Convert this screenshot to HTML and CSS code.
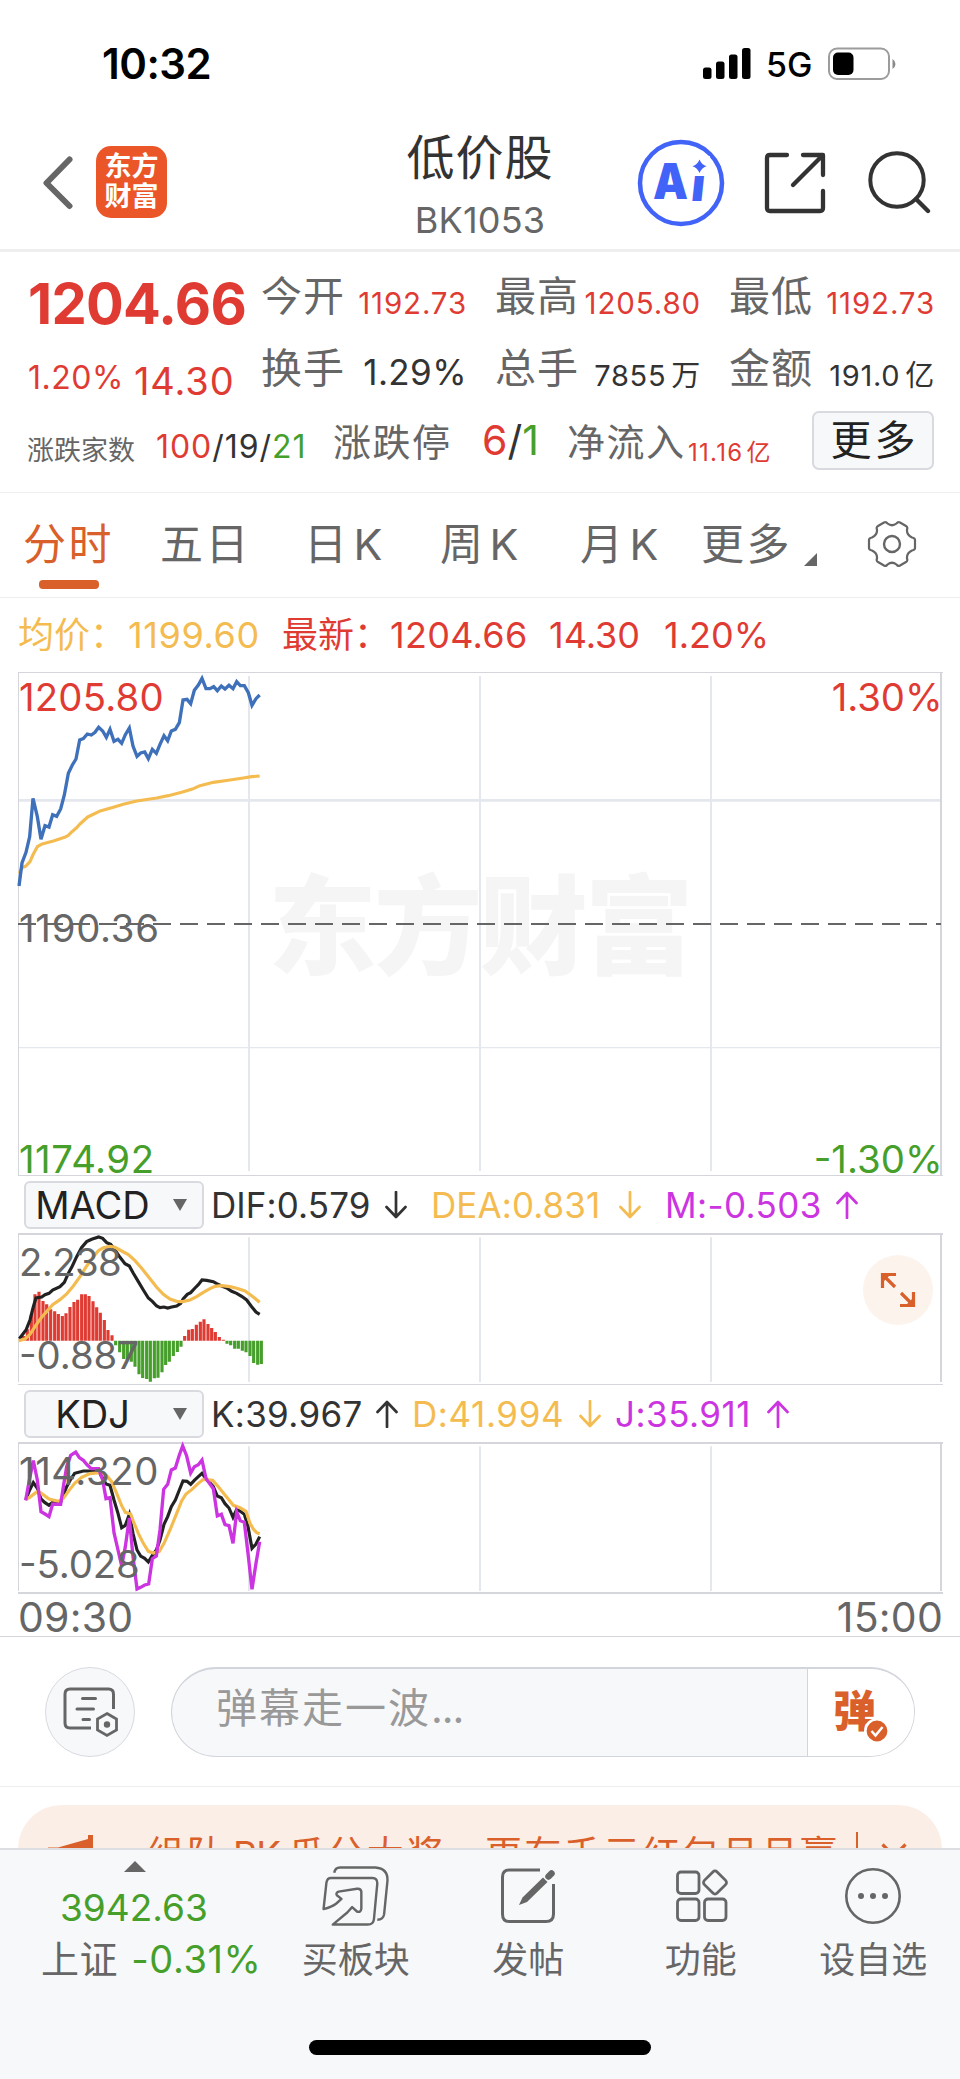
FILE: index.html
```html
<!DOCTYPE html>
<html lang="zh-CN">
<head>
<meta charset="utf-8">
<title>低价股 BK1053</title>
<link rel="stylesheet" href="styles.css">
</head>
<body>
<div class="screen">
  <header class="status">
    <span class="clock">10:32</span>
    <div class="status-right">
      <svg class="signal" width="48" height="32" viewBox="0 0 48 32"><rect x="0" y="19.500" width="8.500" height="11.500" rx="2.500"/><rect x="13" y="13.500" width="8.500" height="17.500" rx="2.500"/><rect x="26" y="6.500" width="8.500" height="24.500" rx="2.500"/><rect x="39" y="0" width="8.500" height="31" rx="2.500"/></svg>
      <span class="net">5G</span>
      <svg width="68" height="34" viewBox="0 0 68 34"><rect x="1" y="1.500" width="60" height="30.500" rx="8" fill="none" stroke="#9c9c9c" stroke-width="2"/><rect x="5" y="5.500" width="20.500" height="22.500" rx="5"/><path d="M64.500 12q3 2 3 5t-3 5z" fill="#8a8a8a"/></svg>
    </div>
  </header>

  <nav class="header">
    <svg class="back" width="30" height="54" viewBox="0 0 30 54"><path d="M26.500 3.500L3.500 27L26.500 50" fill="none" stroke="#666" stroke-width="6" stroke-linecap="round" stroke-linejoin="round"/></svg>
    <div class="logo"><span>东方</span><span>财富</span></div>
    <div class="title"><span class="name">低价股</span><span class="code">BK1053</span></div>
    <svg class="ai" width="88" height="88" viewBox="637 139 88 88"><circle cx="681" cy="183" r="41" fill="none" stroke="#4263f7" stroke-width="4.500"/><g fill="#4263f7"><text x="653" y="199" class="ai-a" textLength="35" lengthAdjust="spacingAndGlyphs">A</text><text class="ai-i" transform="translate(690 201) skewX(-6)">i</text><rect x="688" y="156" width="22" height="18" fill="#fff"/><path d="M699.500 159.500Q701.500 164.500 706.500 166.300Q701.500 168 699.500 173Q697.500 168 692.500 166.300Q697.500 164.500 699.500 159.500Z"/></g></svg>
    <svg class="share" width="62" height="62" viewBox="764 152 62 62"><path d="M787 155H770Q767 155 767 158V208Q767 211 770 211H820Q823 211 823 208V191M803 155H823V175M822 156L793 185" fill="none" stroke="#333" stroke-width="4.300" stroke-linecap="round" stroke-linejoin="round"/></svg>
    <svg class="search" width="64" height="64" viewBox="867 150 64 64"><path d="M916 199L928 211" fill="none" stroke="#333" stroke-width="4.300" stroke-linecap="round"/><circle cx="897" cy="180" r="26.700" fill="none" stroke="#333" stroke-width="4"/></svg>
  </nav>

  <section class="quote">
    <div class="q-row">
      <div class="q-main"><span class="price">1204.66</span></div>
      <div class="q-cell"><span class="lab">今开</span><span class="v29 red">1192.73</span></div>
      <div class="q-cell"><span class="lab">最高</span><span class="v29 red">1205.80</span></div>
      <div class="q-cell"><span class="lab">最低</span><span class="v29 red">1192.73</span></div>
    </div>
    <div class="q-row">
      <div class="q-main"><span class="pct red">1.20%</span><span class="chg red">14.30</span></div>
      <div class="q-cell"><span class="lab">换手</span><span class="v35">1.29%</span></div>
      <div class="q-cell"><span class="lab">总手</span><span class="v28">7855<i>万</i></span></div>
      <div class="q-cell"><span class="lab">金额</span><span class="v28">191.0<i>亿</i></span></div>
    </div>
    <div class="q-row last">
      <span class="lab-s">涨跌家数</span>
      <span class="counts"><b class="red">100</b>/19/<b class="green">21</b></span>
      <span class="lab-m lim">涨跌停</span>
      <span class="limits"><b class="red">6</b>/<b class="green">1</b></span>
      <span class="lab-m flow">净流入</span>
      <span class="inflow red">11.16<i>亿</i></span>
      <button class="more">更多</button>
    </div>
  </section>

  <nav class="tabs">
    <span class="tab active">分时</span><span class="tab">五日</span><span class="tab k">日<b>K</b></span><span class="tab k">周<b>K</b></span><span class="tab k">月<b>K</b></span><span class="tab">更多<svg class="corner" width="13" height="13" viewBox="0 0 13 13"><path d="M13 0V13H0Z" fill="#666"/></svg></span>
    <svg class="gear" width="50" height="48" viewBox="-25 -24 50 48"><path d="M-8 -21.500Q-6 -22.600 -4.500 -20.500Q0 -17 4.500 -20.500Q6 -22.600 8 -21.500L14 -18Q16 -17 15 -14.500Q14.500 -9 20 -6.500Q23 -6 23 -4V4Q23 6 20 6.500Q14.500 9 15 14.500Q16 17 14 18L8 21.500Q6 22.600 4.500 20.500Q0 17 -4.500 20.500Q-6 22.600 -8 21.500L-14 18Q-16 17 -15 14.500Q-14.500 9 -20 6.500Q-23 6 -23 4V-4Q-23 -6 -20 -6.500Q-14.500 -9 -15 -14.500Q-16 -17 -14 -18Z" fill="none" stroke="#666" stroke-width="2.200" stroke-linejoin="round"/><circle r="8" fill="none" stroke="#666" stroke-width="2.400"/></svg>
  </nav>

  <div class="legend">
    <span class="amber avg">均价：</span><span class="amber avg-v">1199.60</span>
    <span class="red last-l">最新：</span><span class="red last-v">1204.66</span><span class="red last-c">14.30</span><span class="red last-p">1.20%</span>
  </div>

  <svg class="chart main" width="925" height="504" viewBox="54 36 2775 1512">
    <text class="mark" x="805" y="917" textLength="1275">东方财富</text>
    <path d="M55 421H2826" stroke="#e5e7ee" stroke-width="8"/>
    <path d="M55 1163H2826" stroke="#e5e7ee" stroke-width="4"/>
    <path d="M747 48V1533M1440 48V1533M2133 48V1533" stroke="#e5e7ee" stroke-width="6"/>
    <path d="M54 37.500H2829M54 1546.500H2829M55.500 36V1548" stroke="#d5d6dc" stroke-width="3"/><path d="M2823 36V1548" stroke="#d5d6dc" stroke-width="6"/>
    <path d="M54 792H2823" stroke="#666" stroke-width="6" stroke-dasharray="54 27"/>
    <path d="M58 640L66 623L78 618L90 605L100 582L112 560L124 553L160 543L194 532L205 526L216 515L228 505L240 492L263 471L298 454L335 443L370 433L410 423L470 414L505 407L545 397L580 386L600 377L640 367L690 360L730 354L755 350L779 348" fill="none" stroke="#f4bc50" stroke-width="9.500" stroke-linejoin="round"/>
    <path d="M57 678L66 609L78 577L89 530L99 415L112 470L123 538L135 497L147 501L158 464L170 469L182 447L193 405L205 340L217 315L228 297L239 240L250 236L262 222L274 225L285 217L296 202L308 213L319 232L330 208L342 244L354 238L365 250L376 224L388 204L399 258L411 289L422 279L434 276L445 296L457 268L469 280L480 253L492 227L503 242L514 213L526 208L538 188L549 120L561 118L572 131L583 91L595 75L606 55L618 86L630 86L641 80L652 92L664 78L675 87L687 76L699 86L710 65L721 77L733 77L745 98L756 136L768 116L779 105" fill="none" stroke="#3f70ba" stroke-width="10"/>
    <text class="lbl red" x="57" y="153" textLength="434">1205.80</text><text class="lbl red" x="2828" y="153" text-anchor="end" textLength="333">1.30%</text>
    <text class="lbl" x="57" y="846" textLength="420">1190.36</text>
    <text class="lbl green" x="57" y="1540" textLength="405">1174.92</text><text class="lbl green" x="2828" y="1540" text-anchor="end" textLength="387">-1.30%</text>
  </svg>

  <div class="ind-row">
    <div class="picker"><span>MACD</span><svg width="14" height="12" viewBox="0 0 14 12"><path d="M0 0H14L7 12Z" fill="#666"/></svg></div>
    <span class="ind i1">DIF:0.579</span><svg class="arrow" viewBox="0 0 22 28"><path d="M11 1V26M1.500 16L11 26L20.500 16"/></svg>
    <span class="ind i2 amber">DEA:0.831</span><svg class="arrow amber" viewBox="0 0 22 28"><path d="M11 1V26M1.500 16L11 26L20.500 16"/></svg>
    <span class="ind i3 violet">M:-0.503</span><svg class="arrow violet" viewBox="0 0 22 28"><path d="M11 27V2M1.500 12L11 2L20.500 12"/></svg>
  </div>
  <div class="panel">
    <svg class="chart" width="925" height="152" viewBox="54 219 2775 456">
      <path d="M747 232V666M1440 232V666M2133 232V666" stroke="#e5e7ee" stroke-width="6"/>
      <path d="M54 222H2829M2823 219V666" stroke="#d5d6dc" stroke-width="6"/><path d="M54 673.500H2829M55.500 222V666" stroke="#d5d6dc" stroke-width="3"/>
      <path d="M71 542V528M82 542V508M94 542V465M105 542V403M117 542V395M129 542V423M140 542V433M152 542V448M164 542V454M175 542V462M187 542V468M198 542V460M210 542V441M222 542V426M233 542V419M245 542V403M256 542V403M267 542V408M279 542V424M290 542V442M301 542V458M313 542V480M324 542V510M336 542V526M554 542V528M566 542V509M577 542V507M589 542V494M601 542V485M612 542V478M624 542V492M635 542V504M646 542V516M658 542V531M670 542V539" stroke="#e03b33" stroke-width="9.500"/>
      <path d="M347 542V556M359 542V577M371 542V597M382 542V600M394 542V605M405 542V620M417 542V643M428 542V654M440 542V657M451 542V665M463 542V655M474 542V653M486 542V637M497 542V615M508 542V605M520 542V588M532 542V576M543 542V560M681 542V551M692 542V556M704 542V566M715 542V566M727 542V572M738 542V577M750 542V588M761 542V609M773 542V614M784 542V612" stroke="#469f2b" stroke-width="9.500"/>
      <path d="M58 536L78 510L90 480L100 440L108 414L125 411L135 404L147 400L158 390L180 380L193 367L205 340L217 318L230 290L245 262L260 245L275 238L296 231L308 235L320 248L332 253L345 270L360 292L375 311L388 318L400 340L415 365L430 390L445 414L457 424L470 438L480 443L492 441L503 444L515 441L530 438L542 430L550 416L562 403L572 398L585 384L595 374L606 360L620 361L640 365L650 371L665 378L680 384L695 394L710 400L725 409L740 420L755 440L768 456L779 463" fill="none" stroke="#222" stroke-width="9.500"/>
      <path d="M56 542L75 537L90 523L105 500L120 478L135 460L158 434L180 419L200 402L220 378L240 350L260 318L280 290L295 272L310 263L330 259L345 262L365 273L385 284L405 302L425 325L450 356L470 382L490 403L510 417L530 424L548 425L570 420L590 410L610 397L630 386L645 379L665 377L690 380L710 385L735 393L755 407L779 427" fill="none" stroke="#f4bc50" stroke-width="9.500"/>
      <text class="lbl" x="57" y="347" textLength="308">2.238</text><text class="lbl" x="57" y="626" textLength="360">-0.887</text>
    </svg>
    <div class="expand"><svg width="36" height="36" viewBox="0 0 36 36"><path d="M16 2.500H2.500V16M3 3L15 15M33.500 20V33.500H20M33 33L21 21" fill="none" stroke="#d9602a" stroke-width="3.200"/><path d="M2 2H11L2 11ZM34 34H25L34 25Z" fill="#d9602a"/></svg></div>
  </div>

  <div class="ind-row">
    <div class="picker"><span>KDJ</span><svg width="14" height="12" viewBox="0 0 14 12"><path d="M0 0H14L7 12Z" fill="#666"/></svg></div>
    <span class="ind k1">K:39.967</span><svg class="arrow" viewBox="0 0 22 28"><path d="M11 27V2M1.500 12L11 2L20.500 12"/></svg>
    <span class="ind k2 amber">D:41.994</span><svg class="arrow amber" viewBox="0 0 22 28"><path d="M11 1V26M1.500 16L11 26L20.500 16"/></svg>
    <span class="ind k3 violet">J:35.911</span><svg class="arrow violet" viewBox="0 0 22 28"><path d="M11 27V2M1.500 12L11 2L20.500 12"/></svg>
  </div>
  <svg class="chart" width="925" height="152" viewBox="54 186 2775 456">
    <path d="M747 199V633M1440 199V633M2133 199V633" stroke="#e5e7ee" stroke-width="6"/>
    <path d="M54 189H2829M2823 186V633M54 639H2829" stroke="#d5d6dc" stroke-width="6"/><path d="M55.500 189V633" stroke="#d5d6dc" stroke-width="3"/>
    <path d="M78 357L89 330L100 308L112 325L123 357L135 368L147 376L158 367L182 366L190 345L200 320L212 298L224 280L250 273L296 273L305 290L318 312L330 316L342 360L354 400L365 443L376 436L388 403L399 460L411 510L422 528L434 535L445 546L457 526L469 510L480 480L492 433L503 410L514 380L526 360L538 330L549 303L561 304L572 313L583 301L595 290L606 280L618 296L640 320L652 348L664 353L675 371L687 384L699 412L710 388L721 394L733 403L744 440L756 505L768 492L779 470" fill="none" stroke="#222" stroke-width="9.500"/>
    <path d="M76 359L89 352L110 336L122 338L147 357L175 364L190 355L205 334L224 310L245 292L270 281L300 278L320 287L335 305L350 340L365 377L376 397L392 402L400 424L415 460L430 490L445 514L460 519L478 514L492 490L510 450L530 400L545 363L558 342L575 329L595 310L610 298L638 301L655 320L675 345L700 376L720 383L738 394L750 430L760 447L770 458L779 461" fill="none" stroke="#f4bc50" stroke-width="9.500"/>
    <path d="M77 361L88 300L100 242L112 300L123 395L135 402L147 410L158 372L182 373L190 320L200 260L212 226L227 216L238 233L250 241L262 255L274 266L296 266L308 300L318 356L330 353L342 458L354 510L365 558L376 500L388 414L399 530L411 627L422 622L434 615L446 612L457 536L469 528L480 450L491 328L503 313L514 270L526 264L538 225L548 198L560 228L572 279L583 260L595 254L606 240L618 296L640 326L652 408L664 403L675 434L687 437L699 490L710 396L721 422L733 427L744 520L756 628L768 550L779 485" fill="none" stroke="#cb34e0" stroke-width="10"/>
    <text class="lbl" x="57" y="314" textLength="418">114.320</text><text class="lbl" x="57" y="593" textLength="362">-5.028</text>
  </svg>
  <div class="times"><span>09:30</span><span>15:00</span></div>

  <div class="danmu">
    <div class="round-btn"><svg width="56" height="52" viewBox="0 0 56 52"><path d="M51.500 23V8Q51.500 3 46.500 3H8Q3 3 3 8V37Q3 42 8 42H29" fill="none" stroke="#666" stroke-width="3"/><path d="M20.500 12.500H33.500M15 23H31.500M21 33.500H27.500" stroke="#666" stroke-width="3" stroke-linecap="round"/><path d="M45 27.500L54.500 33V44L45 49.500L35.500 44V33Z" fill="none" stroke="#666" stroke-width="2.800"/><circle cx="45" cy="38.500" r="3.200" fill="#666"/></svg></div>
    <div class="input"><span class="ph">弹幕走一波<b>...</b></span><div class="dan"><span>弹</span><svg width="26" height="26" viewBox="0 0 26 26"><circle cx="13" cy="13" r="11.700" fill="#d9602a" stroke="#fff" stroke-width="2.600"/><path d="M7.500 13L11.500 17.500L18.500 9" fill="none" stroke="#fff" stroke-width="2.500"/></svg></div></div>
  </div>

  <div class="promo-wrap"><div class="promo">
    <svg class="horn" width="48" height="34" viewBox="0 0 48 34"><path d="M0 12.500H10L40 4V0H45V34H0Z" fill="#d9602a"/></svg>
    <span class="promo-text">组队 <b>PK</b> 瓜分大奖，更有千元红包月月赢</span><i class="bar"></i>
    <svg width="26" height="26" viewBox="0 0 26 26"><path d="M1.500 1.500L24.500 24.500M24.500 1.500L1.500 24.500" stroke="#d9602a" stroke-width="3.200"/></svg>
  </div></div>

  <footer class="bottom">
    <div class="index">
      <svg width="22" height="11" viewBox="0 0 22 11"><path d="M11 0L22 11H0Z" fill="#666"/></svg>
      <span class="idx green">3942.63</span>
      <span class="idx2">上证<b class="green">-0.31%</b></span>
    </div>
    <div class="item"><svg width="72" height="64" viewBox="320 1865 72 64"><path d="M333.500 1873Q334.500 1867.500 339.500 1867.500H376Q389 1868.500 388.500 1881L385 1916Q384 1921.500 378 1921.500M322.500 1910.500L325.500 1883Q326.500 1878.500 330 1878.500H373Q378 1878.500 378 1884L374.500 1921Q374 1926.500 368 1926.500H332L347 1914L352 1908.500L357 1913Q361 1914.500 361.500 1910V1892.500Q361 1889 357 1889.500L338 1892.500Q334.500 1894 336.500 1896.500L341 1900L336 1904.500Q331 1908.500 322.500 1910.500Z" fill="none" stroke="#666" stroke-width="2.500" stroke-linejoin="round"/></svg><span>买板块</span></div>
    <div class="item"><svg width="58" height="60" viewBox="500 1866 58 60"><path d="M541 1870H510Q503.500 1870 503.500 1877V1914Q503.500 1921.500 510 1921.500H547Q554.500 1921.500 554.500 1914V1884" fill="none" stroke="#666" stroke-width="3"/><path d="M544 1877.500L548.500 1882L528 1902L520 1905L523.500 1897.500Z" fill="#666"/><path d="M549.500 1876.500L552.500 1873.500" stroke="#666" stroke-width="6.500" stroke-linecap="round"/></svg><span>发帖</span></div>
    <div class="item"><svg width="54" height="60" viewBox="674 1866 54 60"><g fill="none" stroke="#666" stroke-width="2.800"><rect x="677.500" y="1872" width="21.500" height="21.500" rx="3.500"/><rect x="677.500" y="1899" width="21.500" height="21.500" rx="3.500"/><rect x="704.500" y="1899" width="21.500" height="21.500" rx="3.500"/><rect x="706" y="1873.500" width="18" height="18" rx="3" transform="rotate(45 715 1882.500)"/></g></svg><span>功能</span></div>
    <div class="item"><svg width="60" height="60" viewBox="-30 -30 60 60"><circle r="26.700" fill="none" stroke="#666" stroke-width="2.600"/><g fill="#666"><circle cx="-12" r="3"/><circle r="3"/><circle cx="12" r="3"/></g></svg><span>设自选</span></div>
    <div class="home"></div>
  </footer>
</div>
</body>
</html>
```
FILE: styles.css
```css
* { box-sizing: border-box; margin: 0; padding: 0; }
body { width: 960px; background: #fff; font-family: Inter, "Noto Sans CJK SC", sans-serif; line-height: 1; color: #333; font-size: 40px; }
span, b, i { white-space: nowrap; }
b { font-weight: inherit; }
i { font-style: normal; }
svg { display: block; flex: none; }
.red { color: #e03b33; fill: #e03b33; }
.green { color: #469f2b; fill: #469f2b; }
.amber { color: #f4bc50; }
.violet { color: #cb34e0; }
.screen { display: flex; flex-direction: column; width: 960px; height: 2079px; overflow: hidden; }
.screen > * { flex: none; }

.status { display: flex; justify-content: space-between; height: 128px; padding: 44px 64px 0 102px; }
.clock { font-size: 42px; font-weight: 600; line-height: 40px; color: #000; letter-spacing: -.5px; }
.status-right { display: flex; height: 40px; align-items: center; }
.signal { margin-right: 15px; }
.net { font-size: 34px; font-weight: 500; color: #000; width: 62px; padding-top: 2px; }

.header { display: flex; height: 124px; border-bottom: 3px solid #eee; align-items: flex-start; }
.back { margin: 28px 0 0 43px; }
.logo { margin: 18px 0 0 23px; width: 71px; height: 72px; border-radius: 15px; background: #eb5628; color: #fff; font-weight: 700; font-size: 27px; display: flex; flex-direction: column; align-items: center; gap: 3px; padding-top: 7px; }
.title { margin-left: 241px; width: 144px; display: flex; flex-direction: column; align-items: center; padding-top: 6px; }
.name { font-size: 48px; letter-spacing: 1px; }
.code { font-size: 36px; color: #666; margin-top: 20px; letter-spacing: .2px; }
.ai { margin: 11px 0 0 85px; }
.ai-a { font-size: 50px; font-weight: 900; }
.ai-i { font-size: 46px; font-weight: 900; }
.share { margin: 24px 0 0 39px; }
.search { margin: 22px 0 0 41px; }

.quote { height: 241px; padding: 8px 26px 0 28px; border-bottom: 1px solid #eee; }
.q-row { display: grid; grid-template-columns: 234px 234px 234px 204px; height: 72px; align-items: center; }
.q-row.last { display: flex; }
.q-main { display: flex; align-items: center; }
.q-cell { display: flex; align-items: center; justify-content: space-between; width: 206px; margin-left: -1px; }
.price { font-size: 56px; font-weight: 700; color: #e03b33; padding-top: 15px; letter-spacing: -.7px; }
.lab { font-size: 41px; color: #666; letter-spacing: 1px; }
.v29 { font-size: 29.500px; padding-top: 15px; letter-spacing: .85px; }
.v28 { font-size: 29px; padding-top: 15px; letter-spacing: .7px; }
.v28 i { margin-left: 5px; }
.v35 { font-size: 35px; padding-top: 9px; letter-spacing: .4px; }
.pct { font-size: 32px; padding-top: 19px; width: 106px; letter-spacing: .5px; }
.chg { font-size: 38px; padding-top: 26px; letter-spacing: .9px; }
.lab-s { font-size: 27px; color: #666; padding-top: 20px; width: 129px; margin-left: -1px; }
.counts { font-size: 32px; padding-top: 14px; width: 177px; letter-spacing: .95px; }
.lab-m { font-size: 38px; color: #666; padding-top: 4px; letter-spacing: 1.500px; }
.lim { width: 149px; }
.limits { font-size: 41px; width: 85px; }
.flow { width: 121px; }
.inflow { font-size: 24px; padding-top: 25px; width: 124px; letter-spacing: 1.300px; }
.inflow i { margin-left: 3px; }
.more { font: inherit; font-size: 41px; width: 122px; height: 59px; border: 2px solid #d8dae0; border-radius: 7px; background: #f7f8fa; color: #222; letter-spacing: 3px; padding: 0 0 0 3px; line-height: 54px; }

.tabs { display: grid; grid-template-columns: 137px 144px 136px 140px 121px 165px auto; height: 105px; border-bottom: 1px solid #eee; padding-left: 23px; }
.tab { font-size: 43px; letter-spacing: 2.500px; color: #666; padding-top: 30px; position: relative; }
.k b { margin-left: 4px; }
.active { color: #d9602a; }
.active::after { content: ""; position: absolute; left: 16px; top: 87px; width: 60px; height: 9px; border-radius: 4px; background: #d9602a; }
.corner { position: absolute; left: 103px; top: 60px; }
.gear { margin-top: 27px; margin-left: 1px; }

.legend { display: flex; height: 74px; padding: 19px 0 0 18px; font-size: 36px; }
.avg { width: 110px; } .avg-v { width: 154px; letter-spacing: .6px; } .last-l { width: 108px; } .last-v { width: 159px; letter-spacing: .3px; } .last-c { width: 115px; }

.chart { margin-left: 18px; overflow: visible; }
.lbl { font-family: Inter, sans-serif; font-size: 115px; fill: #666; }
.lbl.red { fill: #e03b33; } .lbl.green { fill: #469f2b; }
.mark { font-family: "Noto Sans CJK SC", sans-serif; font-weight: 900; font-size: 325px; fill: #f5f5f6; }
.ind-row { display: flex; height: 57px; padding: 5px 0 0 24px; align-items: flex-start; }
.picker { display: flex; align-items: center; width: 180px; height: 48px; border: 2px solid #d8dae0; border-radius: 6px; background: #f7f8fa; color: #222; font-size: 38px; padding-right: 15px; }
.picker span { flex: 1; text-align: center; padding-right: 14px; }
.ind { font-size: 35px; margin-top: 7px; letter-spacing: .1px; }
.i1 { width: 174px; margin-left: 7px; } .i2 { width: 188px; margin-left: 24px; } .i3 { width: 171px; margin-left: 24px; letter-spacing: .4px; }
.k1 { width: 165px; margin-left: 7px; letter-spacing: .3px; } .k2 { width: 167px; margin-left: 14px; letter-spacing: .6px; } .k3 { width: 152px; margin-left: 14px; letter-spacing: .5px; }
.arrow { width: 22px; height: 28px; margin-top: 10px; fill: none; stroke: currentColor; stroke-width: 2.700; stroke-linecap: round; stroke-linejoin: round; }
.panel { position: relative; }
.expand { position: absolute; left: 863px; top: 22px; width: 70px; height: 70px; border-radius: 50%; background: #fcf3ed; display: flex; align-items: center; justify-content: center; }
.times { display: flex; justify-content: space-between; height: 43px; border-bottom: 1px solid #d5d6dc; padding: 3px 17px 0 18px; font-size: 41px; color: #666; letter-spacing: .2px; }

.danmu { display: flex; height: 150px; padding: 30px 45px 0; border-bottom: 1px solid #eee; }
.round-btn { width: 90px; height: 90px; border-radius: 50%; border: 1px solid #d8dae0; background: #f7f8fa; display: flex; align-items: center; justify-content: center; }
.input { display: flex; margin-left: 36px; width: 744px; height: 90px; border: 1px solid #d3d5dc; border-top-width: 2px; border-radius: 45px; background: #f7f8fa; overflow: hidden; }
.ph { font-size: 41px; letter-spacing: 2px; color: #999; flex: 1; padding: 19px 0 0 44px; }
.ph b { letter-spacing: -1px; }
.dan { width: 107px; background: #fff; border-left: 1px solid #d3d5dc; position: relative; color: #d9602a; font-weight: 900; font-size: 43px; padding: 21px 0 0 25px; }
.dan svg { position: absolute; left: 56px; top: 49px; }

.promo-wrap { height: 61px; padding: 18px 18px 0; overflow: hidden; }
.promo { height: 88px; border-radius: 44px; background: #fbeee6; display: flex; align-items: flex-start; color: #d9602a; }
.horn { margin: 30px 0 0 30px; }
.promo-text { font-size: 37px; letter-spacing: 2.400px; word-spacing: -5.500px; margin: 31px 0 0 51px; width: 709px; }
.promo-text b { letter-spacing: -.5px; }
.bar { width: 2px; height: 34px; background: #d9602a; margin-top: 27px; }
.promo > svg:last-child { margin: 38px 0 0 23px; }

.bottom { position: relative; height: 231px; display: grid; grid-template-columns: 269.500px repeat(4, 172.500px); background: #f7f8fa; border-top: 2px solid #dcdee2; color: #666; }
.index { display: flex; flex-direction: column; padding-left: 41px; }
.index svg { margin: 11px 0 0 83px; }
.idx { font-size: 37px; margin: 17px 0 0 19px; }
.idx2 { font-size: 38px; margin-top: 14px; display: flex; gap: 13px; letter-spacing: .6px; }
.item { display: flex; flex-direction: column; align-items: center; padding-top: 15px; font-size: 36px; }
.item svg { height: 62px; }
.item span { margin-top: 15px; }
.home { position: absolute; left: 309px; top: 190px; width: 342px; height: 15px; border-radius: 8px; background: #000; }
```
